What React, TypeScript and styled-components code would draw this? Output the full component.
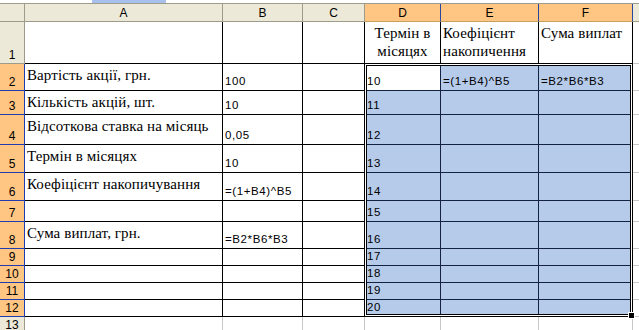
import React from "react";
import styled, { createGlobalStyle, css } from "styled-components";

const GlobalStyle = createGlobalStyle`
  html, body { margin: 0; padding: 0; background: #ffffff; overflow: hidden; }
  * { box-sizing: border-box; }
`;

const SERIF = `"Liberation Serif", "Times New Roman", serif`;
const SANS = `"Liberation Sans", Arial, sans-serif`;

const HEADER_BG = "#ECE9D8";
const HEADER_LINE = "#9E9B8A";
const ACTIVE_BG = "#FFC583";
const ACTIVE_LINE = "#2A47A0";
const SEL_BG = "#B6CBEA";
const SEL_LINE = "#13233F";
const GRID_LINE = "#C8C8C8";

const Page = styled.div`
  width: 639px;
  height: 330px;
  overflow: hidden;
  background: #fff;
`;

const TopStrip = styled.div`
  display: flex;
  height: 3px;
`;

const StripPart = styled.div<{ $w?: number; $blue?: boolean }>`
  width: ${(p) => (p.$w ? `${p.$w}px` : "auto")};
  flex: ${(p) => (p.$w ? "none" : "1")};
  background: ${(p) => (p.$blue ? "#A7C0EC" : "#ffffff")};
`;

const Sheet = styled.div`
  display: grid;
  grid-template-columns: 25px 198px 80px 62px 76px 98px 94px 40px;
  grid-template-rows: 18px 42px 27px 24px 30px 28px 28px 21px 27px 17px 17px 17px 17px 17px;
  border-top: 1px solid ${HEADER_LINE};
`;

const Placed = css<{ $r: number; $c: number }>`
  grid-row: ${(p) => p.$r};
  grid-column: ${(p) => p.$c};
`;

const Corner = styled.div`
  grid-row: 1;
  grid-column: 1;
  background: ${HEADER_BG};
  border-right: 1px solid ${HEADER_LINE};
  border-bottom: 1px solid ${HEADER_LINE};
`;

const ColHeader = styled.div<{ $r: number; $c: number; $active?: boolean }>`
  ${Placed}
  display: flex;
  align-items: center;
  justify-content: center;
  font-family: ${SANS};
  font-size: 12px;
  color: #000;
  background: ${(p) => (p.$active ? ACTIVE_BG : HEADER_BG)};
  border-right: 1px solid ${(p) => (p.$active ? ACTIVE_LINE : HEADER_LINE)};
  border-bottom: 1px solid ${(p) => (p.$active ? "#C9A060" : HEADER_LINE)};
`;

const RowHeader = styled.div<{ $r: number; $c: number; $active?: boolean }>`
  ${Placed}
  display: flex;
  align-items: flex-end;
  justify-content: center;
  padding-bottom: 1px;
  font-family: ${SANS};
  font-size: 12px;
  line-height: 14px;
  color: #000;
  background: ${(p) => (p.$active ? ACTIVE_BG : HEADER_BG)};
  border-right: 1px solid ${(p) => (p.$active ? "#1F3DB0" : HEADER_LINE)};
  border-bottom: 1px solid ${(p) => (p.$active ? "#1F3DB0" : HEADER_LINE)};
`;

type Zone = "table" | "sel" | "active" | "grid";

const zoneStyles: Record<Zone, ReturnType<typeof css>> = {
  table: css`
    background: #fff;
    border-right: 1px solid #000;
    border-bottom: 1px solid #000;
  `,
  sel: css`
    background: ${SEL_BG};
    border-right: 1px solid ${SEL_LINE};
    border-bottom: 1px solid ${SEL_LINE};
  `,
  active: css`
    background: #fff;
    border-right: 1px solid ${SEL_LINE};
    border-bottom: 1px solid ${SEL_LINE};
  `,
  grid: css`
    background: #fff;
    border-right: 1px solid ${GRID_LINE};
    border-bottom: 1px solid ${GRID_LINE};
  `,
};

const Cell = styled.div<{
  $r: number;
  $c: number;
  $zone: Zone;
  $serif?: boolean;
  $center?: boolean;
  $bottom?: boolean;
}>`
  ${Placed}
  ${(p) => zoneStyles[p.$zone]}
  display: flex;
  flex-direction: column;
  justify-content: ${(p) => (p.$bottom ? "flex-end" : "flex-start")};
  align-items: ${(p) => (p.$center ? "center" : "flex-start")};
  text-align: ${(p) => (p.$center ? "center" : "left")};
  padding: ${(p) => (p.$bottom ? "0 2px 2px 2px" : "2px 2px 0 2px")};
  white-space: nowrap;
  color: #000;
  font-family: ${(p) => (p.$serif ? SERIF : SANS)};
  font-size: ${(p) => (p.$serif ? "15px" : "11.5px")};
  line-height: ${(p) => (p.$serif ? "18px" : "14px")};
  letter-spacing: ${(p) => (p.$serif ? "0.1px" : "0.6px")};
`;

const Selection = styled.div`
  grid-column: 5 / 8;
  grid-row: 3 / 14;
  margin: -1px 0 0 -1px;
  position: relative;
  z-index: 2;
  border: 1px solid #000;
  box-shadow: inset 0 0 0 1px #fff, inset 0 0 0 2px #000;
  pointer-events: none;
`;

const FillHandle = styled.div`
  position: absolute;
  right: -2px;
  bottom: -2px;
  width: 5px;
  height: 5px;
  background: #000;
  box-shadow: 0 0 0 1px #fff;
`;

type CellData = { text: React.ReactNode; serif?: boolean; center?: boolean; bottom?: boolean };

const rows: Record<number, Partial<Record<string, CellData>>> = {
  1: {
    D: { text: <>Термін в<br />місяцях</>, serif: true, center: true },
    E: { text: <>Коефіцієнт<br />накопичення</>, serif: true },
    F: { text: "Сума виплат", serif: true },
  },
  2: {
    A: { text: "Вартість акції, грн.", serif: true },
    B: { text: "100", bottom: true },
    D: { text: "10", bottom: true },
    E: { text: "=(1+B4)^B5", bottom: true },
    F: { text: "=B2*B6*B3", bottom: true },
  },
  3: {
    A: { text: "Кількість акцій, шт.", serif: true },
    B: { text: "10", bottom: true },
    D: { text: "11", bottom: true },
  },
  4: {
    A: { text: "Відсоткова ставка на місяць", serif: true },
    B: { text: "0,05", bottom: true },
    D: { text: "12", bottom: true },
  },
  5: {
    A: { text: "Термін в місяцях", serif: true },
    B: { text: "10", bottom: true },
    D: { text: "13", bottom: true },
  },
  6: {
    A: { text: "Коефіцієнт накопичування", serif: true },
    B: { text: "=(1+B4)^B5", bottom: true },
    D: { text: "14", bottom: true },
  },
  7: { D: { text: "15", bottom: true } },
  8: {
    A: { text: "Сума виплат, грн.", serif: true },
    B: { text: "=B2*B6*B3", bottom: true },
    D: { text: "16", bottom: true },
  },
  9: { D: { text: "17", bottom: true } },
  10: { D: { text: "18", bottom: true } },
  11: { D: { text: "19", bottom: true } },
  12: { D: { text: "20", bottom: true } },
};

const COLS = ["A", "B", "C", "D", "E", "F"];
const ALL_COLS = [...COLS, "G"];
const SEL_COLS = ["D", "E", "F"];

function zoneFor(r: number, c: string): Zone {
  if (r > 12 || c === "G") return "grid";
  if (r >= 2 && SEL_COLS.includes(c)) return r === 2 && c === "D" ? "active" : "sel";
  return "table";
}

export default function App() {
  const rowNums = Array.from({ length: 13 }, (_, i) => i + 1);
  return (
    <Page>
      <GlobalStyle />
      <TopStrip>
        <StripPart $w={92} />
        <StripPart $w={74} $blue />
        <StripPart />
      </TopStrip>
      <Sheet>
        <Corner />
        {ALL_COLS.map((c, i) => (
          <ColHeader key={c} $r={1} $c={i + 2} $active={SEL_COLS.includes(c)}>
            {c === "G" ? "" : c}
          </ColHeader>
        ))}
        {rowNums.map((r) => (
          <React.Fragment key={r}>
            <RowHeader $r={r + 1} $c={1} $active={r >= 2 && r <= 12}>
              {r}
            </RowHeader>
            {ALL_COLS.map((c, i) => {
              const d = rows[r]?.[c];
              return (
                <Cell
                  key={c}
                  $r={r + 1}
                  $c={i + 2}
                  $zone={zoneFor(r, c)}
                  $serif={d?.serif}
                  $center={d?.center}
                  $bottom={d?.bottom}
                >
                  {d ? <span>{d.text}</span> : null}
                </Cell>
              );
            })}
          </React.Fragment>
        ))}
        <Selection>
          <FillHandle />
        </Selection>
      </Sheet>
    </Page>
  );
}
